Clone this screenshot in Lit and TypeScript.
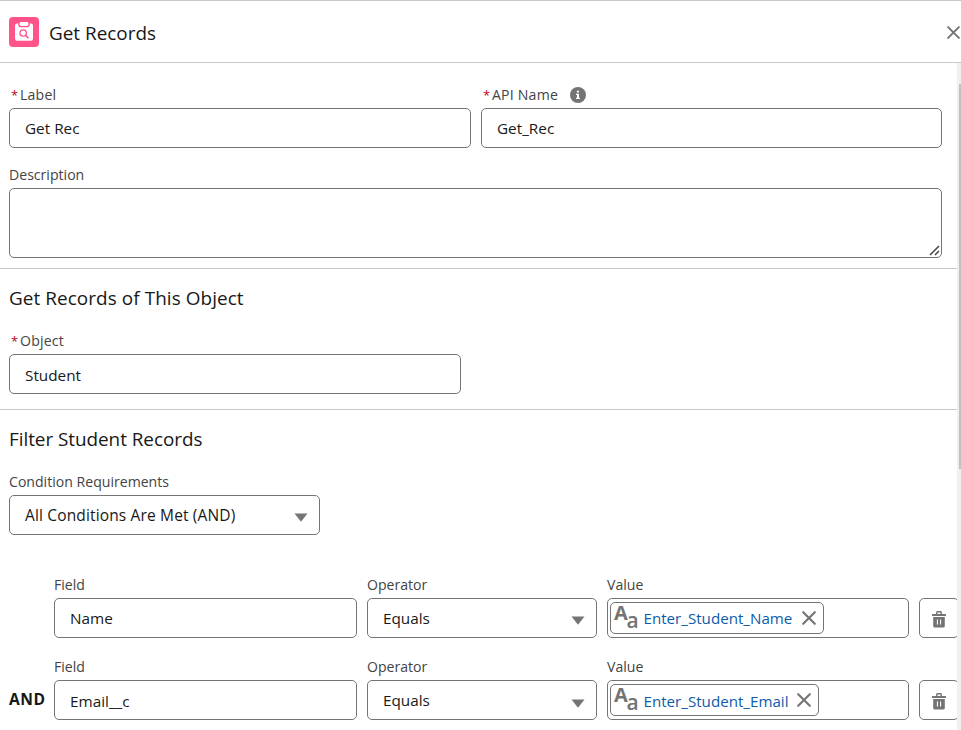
import { LitElement, html, css, svg, nothing } from "lit";
import { customElement, property } from "lit/decorators.js";
import { classMap } from "lit/directives/class-map.js";

const closeIcon = (size: number) => html`<svg width=${size} height=${size} viewBox="0 0 14 14">
  ${svg`<path d="M1.2 1.2L12.8 12.8M12.8 1.2L1.2 12.8" fill="none" stroke="#747474" stroke-width="2.1" stroke-linecap="round"/>`}
</svg>`;

const trashIcon = html`<svg width="14" height="17" viewBox="0 0 14 17">
  <path d="M0.7 3H13.3Q14 3 14 3.7V5H0V3.7Q0 3 0.7 3Z" fill="#747474"/>
  <path d="M4.8 3V1.5Q4.8 0.8 5.5 0.8H8.5Q9.2 0.8 9.2 1.5V3" fill="none" stroke="#747474" stroke-width="1.4"/>
  <path fill-rule="evenodd" d="M1.2 6H12.8V15Q12.8 16.6 11.2 16.6H2.8Q1.2 16.6 1.2 15ZM4.9 8.6V13.6H6V8.6ZM8 8.6V13.6H9.1V8.6Z" fill="#747474"/>
</svg>`;

const recordsIcon = html`<svg width="18" height="19" viewBox="0 0 18 19">
  <path d="M2 1.6H3.2V2.6Q3.2 5.2 5.8 5.2H12.2Q14.8 5.2 14.8 2.6V1.6H16Q18 1.6 18 3.6V16.8Q18 18.8 16 18.8H2Q0 18.8 0 16.8V3.6Q0 1.6 2 1.6Z" fill="#fff"/>
  <rect x="4.6" y="0" width="8.8" height="3.9" rx="1.4" fill="#fff"/>
  <circle cx="8.2" cy="11" r="3.2" fill="none" stroke="#ff538a" stroke-width="1.3"/>
  <path d="M10.5 13.3L13.1 15.8" stroke="#ff538a" stroke-width="1.5" stroke-linecap="round"/>
</svg>`;

@customElement("flow-field")
export class FlowField extends LitElement {
  @property() label = "";
  @property() value = "";
  @property() kind = "text";
  @property({ type: Boolean }) required = false;
  @property({ type: Boolean }) info = false;
  @property({ type: Boolean }) low = false;

  static styles = css`
    :host { display: block; min-width: 0; }
    .label { display: flex; align-items: center; height: 20px; margin-bottom: 3px; font-size: 14.1px; line-height: 20px; color: #444; white-space: nowrap; }
    .req { color: #ba0517; width: 9px; margin-left: 2px; font-size: 13px; }
    .caption.wider { letter-spacing: 0.2px; }
    .info { margin-left: 12px; display: block; }
    .box { box-sizing: border-box; height: 40px; border: 1px solid #747474; border-radius: 5px; display: flex; align-items: center; padding: 0 12px 0 15px; font-size: 15.3px; color: #181818; white-space: nowrap; background: #fff; }
    .low { padding-top: 2px; }
    .area { height: 70px; align-items: flex-end; justify-content: flex-end; padding: 0 1px 1px; }
    .area svg { display: block; }
    .arrow { margin-left: auto; margin-top: 4px; margin-right: -1px; display: block; }
    .value.phrase { font-size: 15.5px; letter-spacing: 0.15px; }
    .lowarrow { margin-top: 6px; }
    .pillbox { padding: 0 2px; }
    .pill { box-sizing: border-box; height: 32px; display: flex; align-items: center; border: 1px solid #747474; border-radius: 5px; padding: 0 7px 0 3px; color: #0b5cab; }
    .name { font-size: 15.15px; }
    .name.lower { padding-top: 2px; }
    .pill .close { display: flex; margin-left: 10px; }
    .lower + .close { margin-left: 9px; }
    .glyph { display: flex; width: 30px; height: 30px; color: #747474; margin-right: -0.5px; }
    .big { font: 700 20px/20px "Open Sans", sans-serif; width: 13px; letter-spacing: -1px; }
    .small { font: 600 21px/22px "Open Sans", sans-serif; margin-top: 6px; margin-left: -0.5px; }
  `;

  private control() {
    if (this.kind === "area")
      return html`<div class="box area"><svg width="11" height="11" viewBox="0 0 11 11"><path d="M1 10L10 1M6 10L10 6" stroke="#444" stroke-width="1.5"/></svg></div>`;
    if (this.kind === "pill")
      return html`<div class="box pillbox"><div class="pill"><span class="glyph"><span class="big">A</span><span class="small">a</span></span><span class=${classMap({ name: true, lower: this.low })}>${this.value}</span><span class="close">${closeIcon(14)}</span></div></div>`;
    return html`<div class=${classMap({ box: true, low: this.low && this.kind === "text" })}>
      <span class=${classMap({ value: true, phrase: this.value.length > 10 })}>${this.value}</span>
      ${this.kind === "select" ? html`<svg class=${classMap({ arrow: true, lowarrow: this.low })} width="14" height="9" viewBox="0 0 14 9"><path d="M0.5 0.5H13.5L7 8.7Z" fill="#747474"/></svg>` : nothing}
    </div>`;
  }

  render() {
    return html`<div class="label">
        ${this.required ? html`<span class="req">*</span>` : nothing}<span class=${classMap({ caption: true, wider: this.required })}>${this.label}</span>
        ${this.info ? html`<svg class="info" width="16" height="16" viewBox="0 0 16 16"><circle cx="8" cy="8" r="8" fill="#747474"/><path d="M6.9 3.7H9V5.6H6.9ZM6 6.7H9V10.8H10V12H6V10.8H7V7.9H6Z" fill="#fff"/></svg>` : nothing}
      </div>${this.control()}`;
  }
}

@customElement("app-root")
export class AppRoot extends LitElement {
  static styles = css`
    :host { display: flex; flex-direction: column; box-sizing: border-box; width: 961px; height: 730px; overflow: hidden; background: #fff; border-top: 1px solid #c9c9c9; font-family: "Open Sans", "Noto Sans", sans-serif; color: #181818; }
    .header { box-sizing: border-box; height: 62px; flex: none; border-bottom: 1px solid #c9c9c9; display: flex; align-items: center; padding: 0 1px 0 9px; }
    .badge { width: 30px; height: 30px; border-radius: 4px; background: #ff538a; display: flex; align-items: center; justify-content: center; margin-right: 10px; }
    .title { font-size: 18.9px; padding-top: 2px; }
    .header .close { display: flex; margin-left: auto; margin-right: 0; margin-top: 2px; }
    .main { flex: 1; min-height: 0; display: flex; }
    .content { width: 957px; overflow: hidden; }
    .track { width: 4px; box-sizing: border-box; background: #f0f0f0; padding: 21px 0 0 2px; }
    .thumb { height: 385px; background: #c1c1c1; }
    .section { box-sizing: border-box; padding-left: 9px; border-bottom: 1px solid #c9c9c9; }
    .basics { height: 206px; padding: 22px 15px 0 9px; display: grid; grid-template-columns: 462px 461px; column-gap: 10px; row-gap: 17px; align-content: start; }
    .wide { grid-column: 1 / 3; }
    .object { height: 141px; padding-top: 15px; }
    .object .heading { letter-spacing: 0.08px; }
    .filter { padding-top: 15px; border: 0; }
    .heading { font-size: 18.9px; letter-spacing: -0.04px; line-height: 28px; height: 28px; margin-bottom: 19px; white-space: nowrap; }
    .objfield { width: 452px; }
    .logic { width: 311px; margin-bottom: 40px; }
    .row { display: grid; grid-template-columns: 35px 303px 230px 302px 40px; column-gap: 10px; margin-bottom: 19px; align-items: end; }
    .and { font-size: 15.6px; letter-spacing: 0.5px; font-weight: 700; line-height: 42px; height: 42px; }
    .trash { box-sizing: border-box; height: 40px; border: 1px solid #747474; border-radius: 5px; display: flex; align-items: center; justify-content: center; padding: 2px 1px 0 0; }
    .row + .row .trash { padding-top: 3px; }
  `;

  private rows = [
    { joiner: "", field: "Name", value: "Enter_Student_Name" },
    { joiner: "AND", field: "Email__c", value: "Enter_Student_Email" },
  ];

  render() {
    return html`
      <div class="header"><div class="badge">${recordsIcon}</div><div class="title">Get Records</div><div class="close">${closeIcon(13)}</div></div>
      <div class="main">
        <div class="content">
          <div class="section basics">
            <flow-field label="Label" value="Get Rec" required></flow-field>
            <flow-field label="API Name" value="Get_Rec" required info></flow-field>
            <flow-field class="wide" label="Description" kind="area"></flow-field>
          </div>
          <div class="section object">
            <div class="heading">Get Records of This Object</div>
            <flow-field class="objfield" label="Object" value="Student" required low></flow-field>
          </div>
          <div class="section filter">
            <div class="heading">Filter Student Records</div>
            <flow-field class="logic" label="Condition Requirements" value="All Conditions Are Met (AND)" kind="select"></flow-field>
            ${this.rows.map((r) => html`<div class="row">
              <div class="and">${r.joiner}</div>
              <flow-field label="Field" value=${r.field} ?low=${r.joiner !== ""}></flow-field>
              <flow-field label="Operator" value="Equals" kind="select" ?low=${r.joiner !== ""}></flow-field>
              <flow-field label="Value" value=${r.value} kind="pill" ?low=${r.joiner !== ""}></flow-field>
              <div class="trash">${trashIcon}</div>
            </div>`)}
          </div>
        </div>
        <div class="track"><div class="thumb"></div></div>
      </div>`;
  }
}
